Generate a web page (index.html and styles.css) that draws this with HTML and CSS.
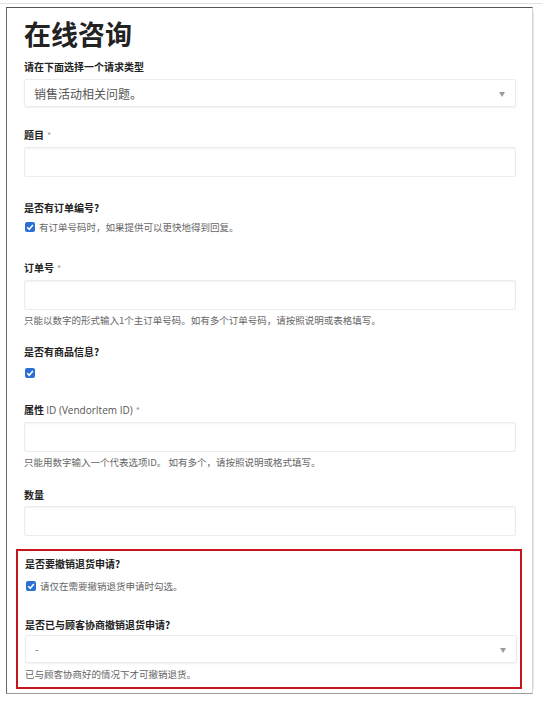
FILE: index.html
```html
<!DOCTYPE html>
<html lang="zh">
<head>
<meta charset="utf-8">
<link rel="stylesheet" href="styles.css">
</head>
<body>
<div class="topline"></div>
<div class="frame">
  <h1 class="title">在线咨询</h1>
  <div class="label l-type">请在下面选择一个请求类型</div>
  <div class="select s-type"><span class="sel-text">销售活动相关问题。</span><span class="arrow">▼</span></div>

  <div class="label l-gap1">题目<span class="req">*</span></div>
  <div class="input"></div>

  <div class="label l-gap2">是否有订单编号?</div>
  <div class="check-row"><span class="cb"><svg viewBox="0 0 10 10" width="10" height="10"><path d="M2.2 5.2 L4.2 7.2 L7.9 2.9" fill="none" stroke="#fff" stroke-width="1.6"/></svg></span><span class="cb-text">有订单号码时，如果提供可以更快地得到回复。</span></div>

  <div class="label l-gap3">订单号<span class="req">*</span></div>
  <div class="input"></div>
  <div class="hint">只能以数字的形式输入1个主订单号码。如有多个订单号码，请按照说明或表格填写。</div>

  <div class="label l-gap4">是否有商品信息?</div>
  <div class="check-row cr-gap"><span class="cb"><svg viewBox="0 0 10 10" width="10" height="10"><path d="M2.2 5.2 L4.2 7.2 L7.9 2.9" fill="none" stroke="#fff" stroke-width="1.6"/></svg></span></div>

  <div class="label l-gap5">属性 <span class="latin">ID (VendorItem ID)</span><span class="req">*</span></div>
  <div class="input"></div>
  <div class="hint">只能用数字输入一个代表选项ID。 如有多个，请按照说明或格式填写。</div>

  <div class="label l-gap6">数量</div>
  <div class="input"></div>

  <div class="alert-box">
    <div class="label">是否要撤销退货申请?</div>
    <div class="check-row cr-gap2"><span class="cb"><svg viewBox="0 0 10 10" width="10" height="10"><path d="M2.2 5.2 L4.2 7.2 L7.9 2.9" fill="none" stroke="#fff" stroke-width="1.6"/></svg></span><span class="cb-text">请仅在需要撤销退货申请时勾选。</span></div>
    <div class="label l-gap7">是否已与顾客协商撤销退货申请?</div>
    <div class="select s-neg"><span class="sel-text small">-</span><span class="arrow">▼</span></div>
    <div class="hint">已与顾客协商好的情况下才可撤销退货。</div>
  </div>
</div>
</body>
</html>
```
FILE: styles.css
```css
html, body {
  margin: 0;
  padding: 0;
  background: #fff;
}
body {
  width: 542px;
  height: 703px;
  position: relative;
  overflow: hidden;
  font-family: "Noto Sans CJK SC", "Noto Sans", sans-serif;
  color: #222;
}
.topline {
  height: 3px;
  border-bottom: 1px solid #e2e2e2;
  margin: 0 0 3px 0;
}
.frame {
  margin-left: 6px;
  width: 508px;
  height: 677px;
  box-sizing: content-box;
  border-top: 1px solid #555;
  border-left: 1px solid #6a6a6a;
  border-right: 1px solid #d6d6d6;
  border-bottom: 1px solid #9a9a9a;
  padding: 8px 0 0 17px;
  box-shadow: 6px 0 0 -5px #e6e6e6;
  overflow: hidden;
}
.title {
  margin: 0;
  font-size: 27px;
  line-height: 36px;
  font-weight: 700;
  color: #222;
}
.label {
  font-size: 10px;
  line-height: 16px;
  font-weight: 700;
  color: #222;
}
.latin {
  font-family: "Open Sans", "Noto Sans", sans-serif;
  font-weight: 400;
  color: #555;
  font-size: 10px;
}
.req {
  color: #999;
  font-weight: 400;
  margin-left: 3px;
  font-size: 9px;
}
.l-type { margin-top: 7px; }
.l-gap1 { margin-top: 20px; }
.l-gap2 { margin-top: 23px; }
.l-gap3 { margin-top: 25px; }
.l-gap4 { margin-top: 16px; }
.l-gap5 { margin-top: 21px; }
.l-gap6 { margin-top: 17px; }
.l-gap7 { margin-top: 23px; }

.select {
  margin-top: 4px;
  width: 492px;
  height: 28px;
  box-sizing: border-box;
  border: 1px solid #ececec;
  border-radius: 2px;
  box-shadow: 0 1px 2px rgba(0,0,0,0.06);
  display: flex;
  align-items: center;
  justify-content: space-between;
  padding: 0 10px 0 9px;
}
.s-neg { margin-top: 2px; }
.sel-text {
  font-size: 12px;
  color: #555;
}
.sel-text.small { font-size: 11px; color: #777; }
.arrow {
  font-size: 6px;
  color: #999;
}
.input {
  margin-top: 3px;
  width: 492px;
  height: 30px;
  box-sizing: border-box;
  border: 1px solid #ececec;
  border-radius: 2px;
  box-shadow: inset 0 1px 2px rgba(0,0,0,0.05);
}
.check-row {
  margin-top: 3px;
  height: 16px;
  display: flex;
  align-items: center;
  gap: 4px;
  padding-left: 1px;
}
.cr-gap { margin-top: 5px; }
.cr-gap2 { margin-top: 6px; }
.cb {
  width: 10px;
  height: 10px;
  background: #2a6fd6;
  border-radius: 2px;
  display: inline-flex;
}
.cb svg { display: block; }
.cb-text {
  font-size: 9.5px;
  color: #666;
}
.hint {
  margin-top: 2px;
  font-size: 9.5px;
  line-height: 16px;
  color: #666;
}
.alert-box {
  margin: 13px 0 0 -8px;
  width: 495px;
  height: 131px;
  border: 2px solid #c4161c;
  padding: 5px 0 0 7px;
  box-sizing: content-box;
}
.alert-box .hint { margin-top: 3px; }
```
